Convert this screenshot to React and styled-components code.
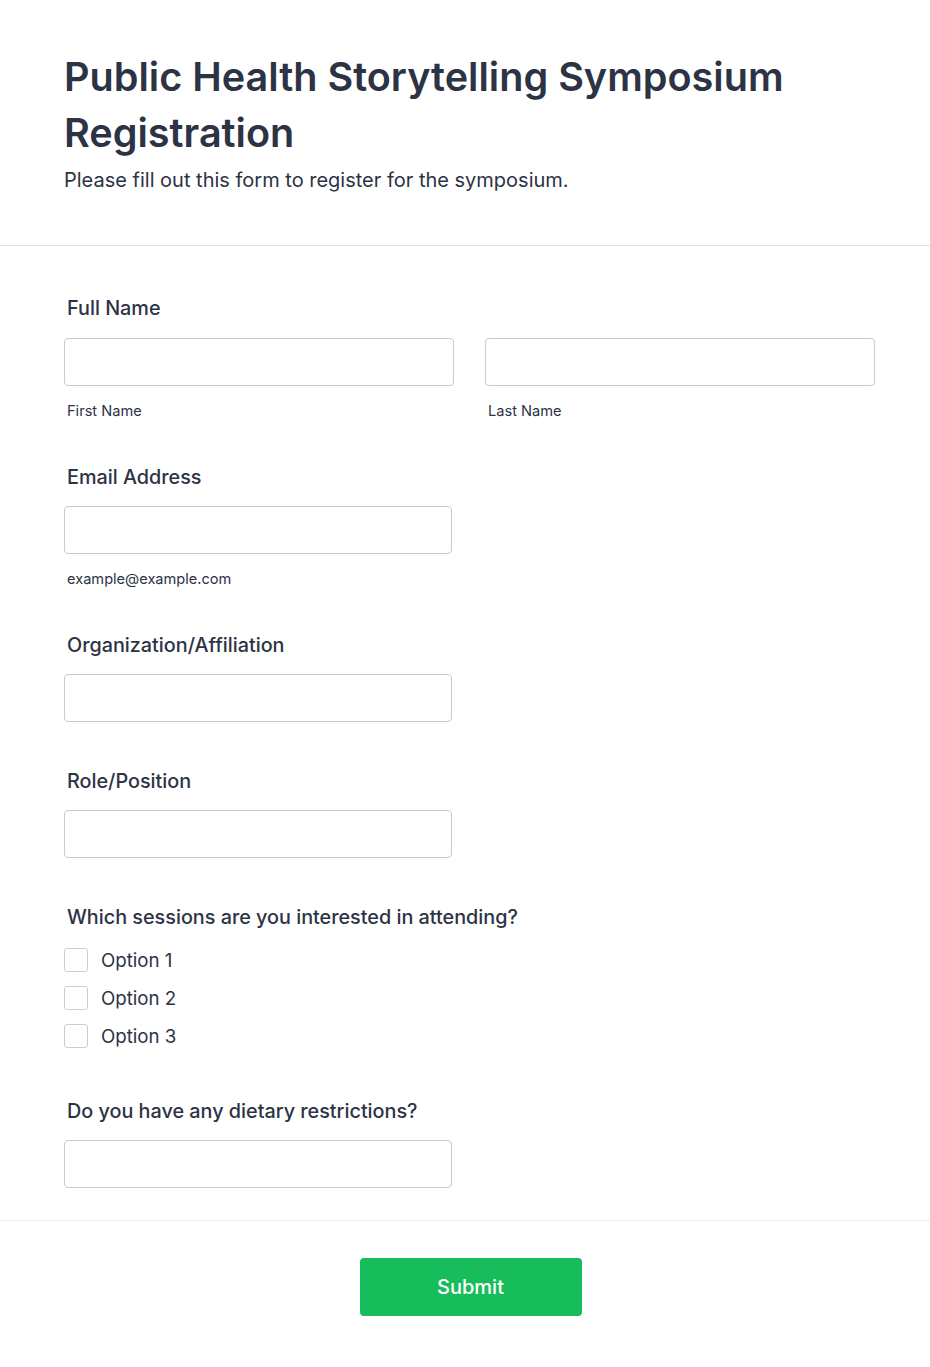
import React from "react";
import styled, { createGlobalStyle } from "styled-components";

const GlobalStyle = createGlobalStyle`
  * { box-sizing: border-box; }
  body {
    margin: 0;
    background: #ffffff;
    font-family: "Inter", "Noto Sans", sans-serif;
    color: #2c3345;
  }
`;

const Page = styled.div`
  width: 930px;
  padding-bottom: 51px;
`;

const Header = styled.header`
  padding: 49px 55px 51px 64px;
  border-bottom: 1px solid #dde2ea;
`;

const Title = styled.h1`
  margin: 0;
  font-size: 39.6px;
  line-height: 56px;
  font-weight: 600;
  color: #2c3345;
`;

const Subtitle = styled.p`
  margin: 5px 0 0;
  font-size: 20px;
  line-height: 28px;
  color: #2c3345;
`;

const Body = styled.main`
  padding: 48px 55px 32px 64px;
  display: flex;
  flex-direction: column;
  border-bottom: 1px solid #ececf1;
`;

const Field = styled.section`
  display: flex;
  flex-direction: column;
  margin-bottom: ${(p) => (p.$last ? 0 : p.$space || 43)}px;
`;

const Label = styled.label`
  font-size: 19.8px;
  line-height: 28px;
  font-weight: 500;
  padding-left: 3px;
  margin-bottom: ${(p) => p.$gap || 15}px;
`;

const Row = styled.div`
  display: grid;
  grid-template-columns: 390px 390px;
  column-gap: 31px;
`;

const Col = styled.div`
  display: flex;
  flex-direction: column;
`;

const Input = styled.input`
  width: ${(p) => p.$width || 388}px;
  height: 48px;
  border: 1px solid #c3cad8;
  border-radius: 4px;
  background: #fff;
  font-family: inherit;
  font-size: 16px;
  padding: 0 12px;
  outline: none;
`;

const SubLabel = styled.span`
  margin-top: 16px;
  font-size: 14.6px;
  line-height: 18px;
  padding-left: 3px;
  color: #2c3345;
`;

const Options = styled.div`
  display: flex;
  flex-direction: column;
`;

const Option = styled.label`
  display: flex;
  align-items: center;
  gap: 13px;
  height: 38px;
  font-size: 18.7px;
  color: #2c3345;
`;

const Box = styled.span`
  width: 24px;
  height: 24px;
  border: 1px solid #c8ced9;
  border-radius: 3px;
  background: #fff;
`;

const Footer = styled.div`
  padding: 37px 55px 0 64px;
  display: flex;
  justify-content: center;
`;

const SubmitButton = styled.button`
  width: 222px;
  height: 58px;
  border: none;
  border-radius: 4px;
  background: #18bd5b;
  color: #fff;
  font-family: inherit;
  font-size: 20px;
  font-weight: 500;
  margin-left: 2px;
`;

export default function App() {
  return (
    <Page>
      <GlobalStyle />
      <Header>
        <Title>Public Health Storytelling Symposium Registration</Title>
        <Subtitle>Please fill out this form to register for the symposium.</Subtitle>
      </Header>
      <Body>
        <Field>
          <Label $gap={16}>Full Name</Label>
          <Row>
            <Col>
              <Input $width={390} />
              <SubLabel>First Name</SubLabel>
            </Col>
            <Col>
              <Input $width={390} />
              <SubLabel>Last Name</SubLabel>
            </Col>
          </Row>
        </Field>
        <Field>
          <Label>Email Address</Label>
          <Input type="email" />
          <SubLabel>example@example.com</SubLabel>
        </Field>
        <Field $space={45}>
          <Label>Organization/Affiliation</Label>
          <Input />
        </Field>
        <Field $space={45}>
          <Label>Role/Position</Label>
          <Input />
        </Field>
        <Field $space={42}>
          <Label $gap={10}>Which sessions are you interested in attending?</Label>
          <Options>
            {["Option 1", "Option 2", "Option 3"].map((o) => (
              <Option key={o}>
                <Box />
                {o}
              </Option>
            ))}
          </Options>
        </Field>
        <Field $last>
          <Label>Do you have any dietary restrictions?</Label>
          <Input />
        </Field>
      </Body>
      <Footer>
        <SubmitButton>Submit</SubmitButton>
      </Footer>
    </Page>
  );
}
